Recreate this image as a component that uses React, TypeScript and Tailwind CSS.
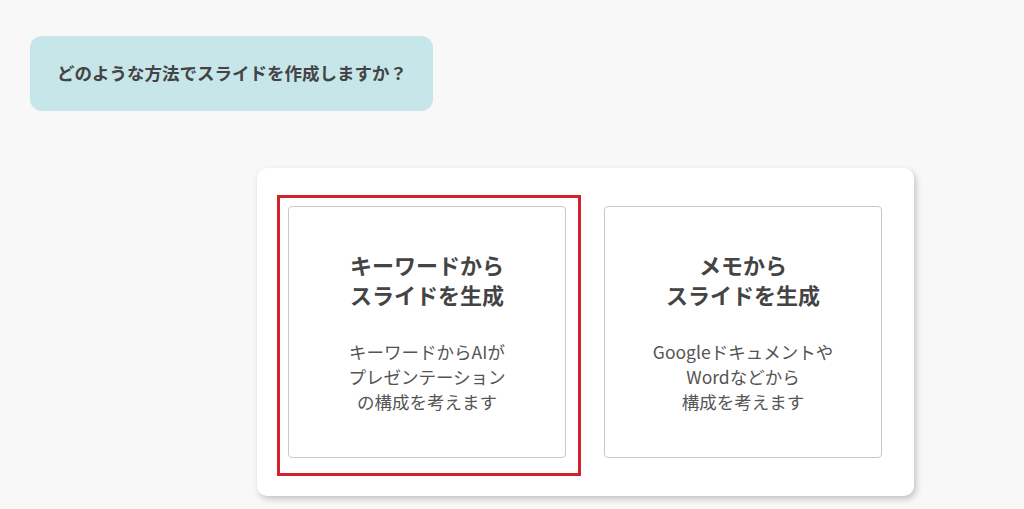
import React from 'react';

const font = { fontFamily: '"Noto Sans CJK JP", "Noto Sans", sans-serif' };

function OptionCard({ title, desc }: { title: string[]; desc: string[] }) {
  return (
    <div className="w-[278px] h-[252px] bg-white border border-[#c8c8c8] rounded-[4px] flex flex-col items-center justify-center text-center pb-[2px]">
      <div className="text-[22px] leading-[30px] font-bold text-[#444]">
        {title.map((t) => (
          <div key={t}>{t}</div>
        ))}
      </div>
      <div className="mt-[30px] text-[17.5px] leading-[25px] text-[#555]">
        {desc.map((t) => (
          <div key={t}>{t}</div>
        ))}
      </div>
    </div>
  );
}

export default function App() {
  return (
    <div className="w-[1024px] h-[509px] bg-[#f8f8f8] overflow-hidden" style={font}>
      <div className="pt-[36px] pl-[30px]">
        <div className="w-[403px] h-[75px] bg-[#c6e6ea] rounded-[12px] flex items-center pl-[27px]">
          <span className="text-[17.5px] font-bold text-[#444]">
            どのような方法でスライドを作成しますか？
          </span>
        </div>
      </div>
      <div className="mt-[57px] ml-[257px] w-[657px] h-[328px] bg-white rounded-[10px] shadow-[2px_3px_6px_rgba(0,0,0,0.22)] flex items-start gap-[38px] pt-[38px] pl-[31px]">
        <div className="relative">
          <OptionCard title={['キーワードから', 'スライドを生成']} desc={['キーワードからAIが', 'プレゼンテーション', 'の構成を考えます']} />
          <div className="absolute -left-[11px] -top-[11px] -right-[15px] -bottom-[18px] border-[3px] border-[#d2202c] pointer-events-none" />
        </div>
        <OptionCard title={['メモから', 'スライドを生成']} desc={['Googleドキュメントや', 'Wordなどから', '構成を考えます']} />
      </div>
    </div>
  );
}
